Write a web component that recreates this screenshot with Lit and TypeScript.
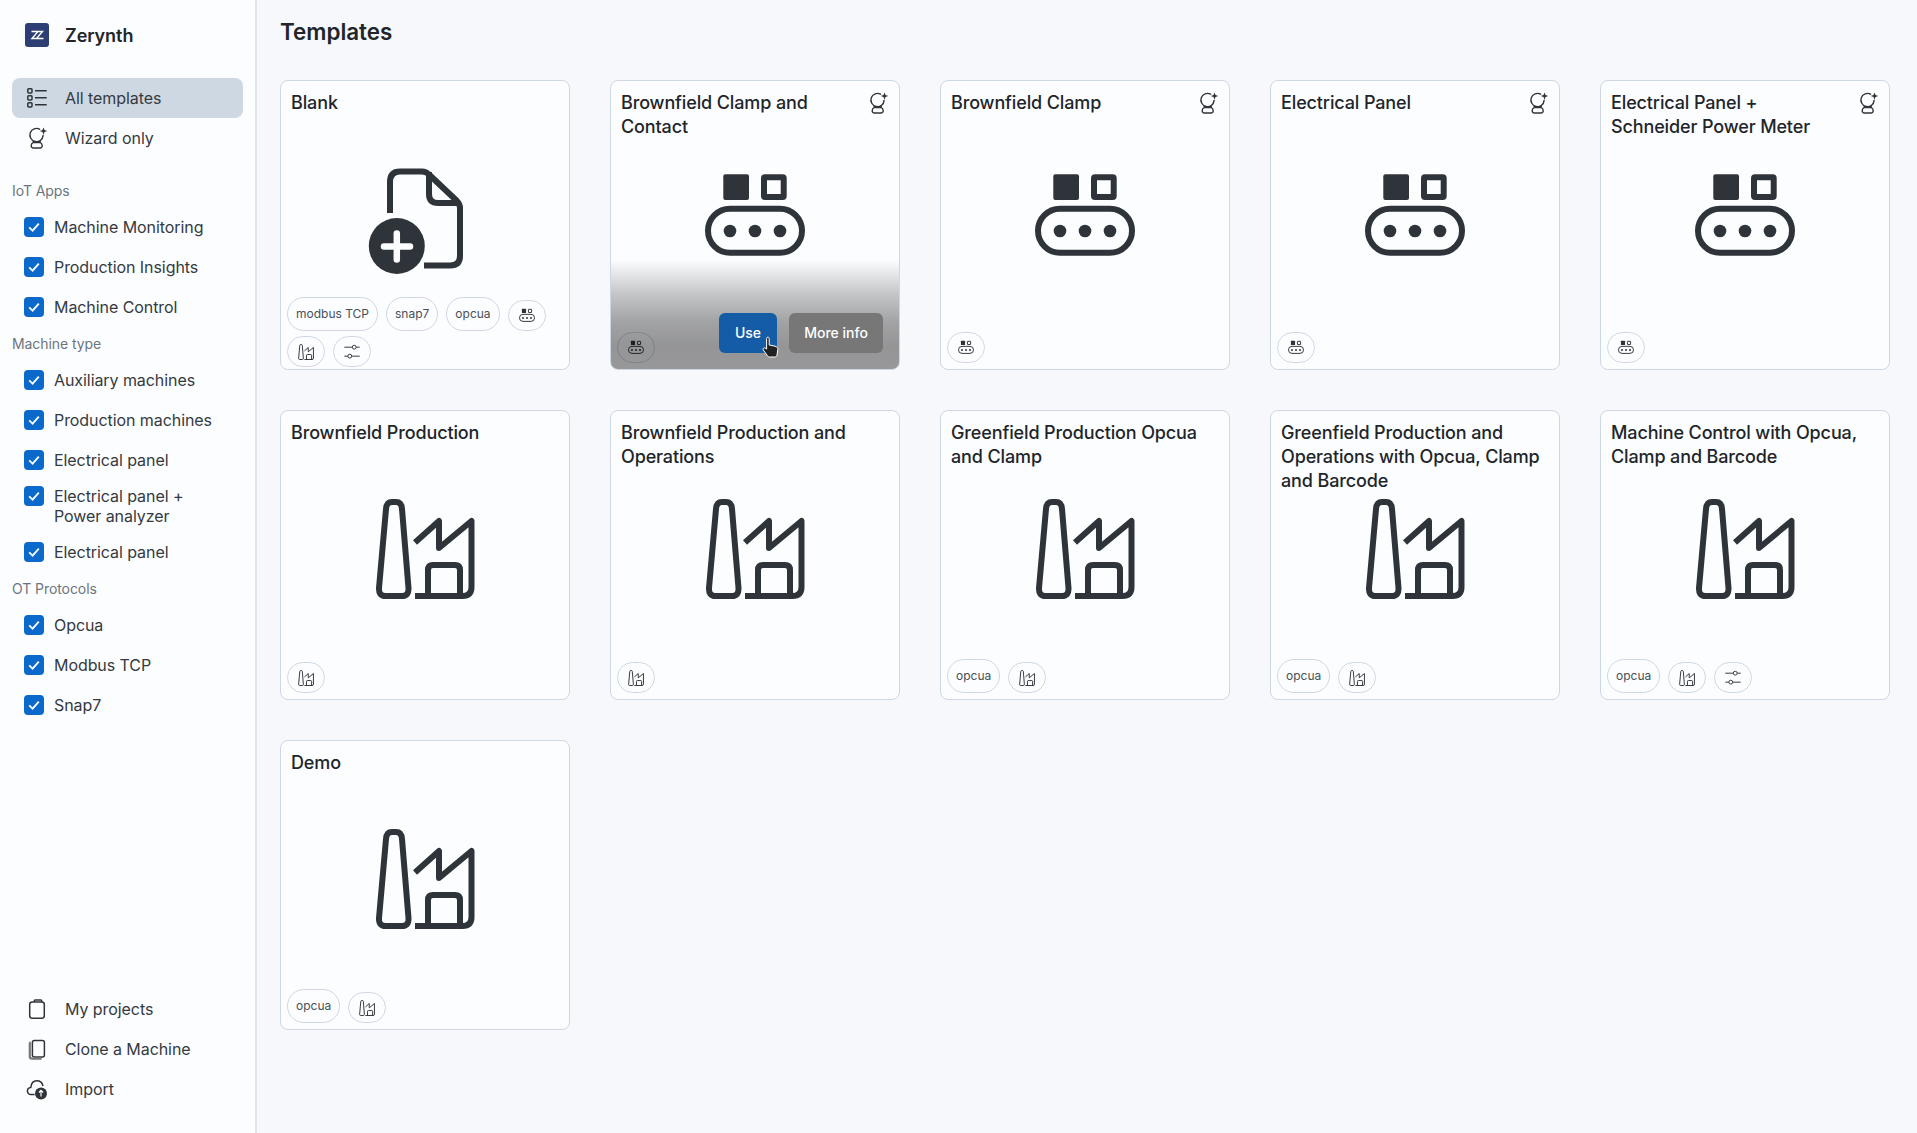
import { LitElement, html, css, svg } from "lit";
import { customElement } from "lit/decorators.js";

const ICON = {
  file: svg`<path d="M15 44V13Q15 2.5 25 2.5H47Q51 2.5 54 5.5L82 32Q85 35 85 39V87Q85 96.5 75 96.5H49" fill="none" stroke="currentColor" stroke-width="6"/>
    <path d="M54 3V25Q54 34 63 34H85" fill="none" stroke="currentColor" stroke-width="6"/>
    <circle cx="21.8" cy="77" r="28" fill="currentColor"/>
    <path d="M9 77.5H35M21.8 64.5V90.5" fill="none" stroke="#fcfdff" stroke-width="6.5" stroke-linecap="round"/>`,
  belt: svg`<rect x="18.3" y="5.3" width="25.7" height="25.7" rx="2" fill="currentColor"/>
    <rect x="59" y="8.3" width="19.7" height="19.7" rx="1" fill="none" stroke="currentColor" stroke-width="6"/>
    <rect x="3" y="39.7" width="94" height="44" rx="22" fill="none" stroke="currentColor" stroke-width="6"/>
    <circle cx="25" cy="62" r="6.3" fill="currentColor"/><circle cx="50" cy="62" r="6.3" fill="currentColor"/><circle cx="75" cy="62" r="6.3" fill="currentColor"/>`,
  factory: svg`<path d="M11 10Q11.5 3 17 3H21Q26.5 3 27 10L33.5 89Q34 97 27 97H10.5Q3.5 97 4 89Z" fill="none" stroke="currentColor" stroke-width="6"/>
    <path d="M40 43.5L64 22V49L96.5 22V88Q96.5 97 87.5 97H40" fill="none" stroke="currentColor" stroke-width="6" stroke-linejoin="round"/>
    <path d="M53 97V71Q53 66 58 66H80Q85 66 85 71V97" fill="none" stroke="currentColor" stroke-width="6"/>`,
  sliders: svg`<path d="M2 20H52M76 20H98M2 76H24M48 76H98" fill="none" stroke="currentColor" stroke-width="6"/>
    <circle cx="64" cy="20" r="12" fill="none" stroke="currentColor" stroke-width="6"/>
    <circle cx="36" cy="76" r="12" fill="none" stroke="currentColor" stroke-width="6"/>`,
  wizard: svg`<path d="M13.6 3.2A6.6 6.6 0 1 0 17.1 9.4M7.2 15V16.6C4.8 17.2 4.4 22 7 22H14.4C17 22 16.6 17.2 14.2 16.6V15M7.2 16.6H14.2" fill="none" stroke="currentColor" stroke-width="1.4" stroke-linecap="round" stroke-linejoin="round"/>
    <path d="M17.5 1.4L18.5 4.1L21.2 5.1L18.5 6.1L17.5 8.8L16.5 6.1L13.8 5.1L16.5 4.1Z" fill="currentColor"/>`,
  list: svg`<rect x="1.8" y="2.7" width="4.2" height="4.2" rx=".9"/><rect x="1.8" y="9.7" width="4.2" height="4.2" rx=".9"/><rect x="1.8" y="16.7" width="4.2" height="4.2" rx=".9"/>
    <path d="M9 4.8H20.7M9 11.8H20.7M9 18.8H20.7"/>`,
  clipboard: svg`<rect x="3.7" y="5" width="14.6" height="16.3" rx="2.5"/><path d="M8.3 5V3.8Q8.3 3 9.1 3H14.9Q15.7 3 15.7 3.8V5"/>`,
  clone: svg`<rect x="6.4" y="3.4" width="12" height="16.6" rx="2"/><path d="M4.6 5.2Q3.8 5.8 3.8 7V19.5Q3.8 21.6 6 21.6H15.6" stroke="#777" stroke-width="2.2"/>`,
  cloud: svg`<path d="M8.6 17.5H5C2.8 17.5 1.4 15.8 1.4 14C1.4 12 2.8 10.6 4.8 10.4C5.2 6.4 7.6 3.7 10.8 3.7C14 3.7 16.4 6 17 9" />
    <circle cx="15" cy="16.4" r="6" fill="currentColor" stroke="none"/>
    <path d="M15 19.5V13.5M12.9 15.5L15 13.4L17.1 15.5" stroke="#fcfdff" stroke-width="1.2"/>`,
};

const CHIP = {
  belt: html`<svg class="chip-ico" viewBox="0 0 100 100">${ICON.belt}</svg>`,
  factory: html`<svg class="chip-ico" viewBox="0 0 100 100">${ICON.factory}</svg>`,
  sliders: html`<svg class="chip-ico" viewBox="0 0 100 100">${ICON.sliders}</svg>`,
};

type Tag = "modbus TCP" | "snap7" | "opcua" | "belt" | "factory" | "sliders";

interface Template {
  title: string;
  icon: "file" | "belt" | "factory";
  wizard?: boolean;
  hover?: boolean;
  tags: Tag[];
}

const TEMPLATES: Template[] = [
  { title: "Blank", icon: "file", tags: ["modbus TCP", "snap7", "opcua", "belt", "factory", "sliders"] },
  { title: "Brownfield Clamp and Contact", icon: "belt", wizard: true, hover: true, tags: ["belt"] },
  { title: "Brownfield Clamp", icon: "belt", wizard: true, tags: ["belt"] },
  { title: "Electrical Panel", icon: "belt", wizard: true, tags: ["belt"] },
  { title: "Electrical Panel + Schneider Power Meter", icon: "belt", wizard: true, tags: ["belt"] },
  { title: "Brownfield Production", icon: "factory", tags: ["factory"] },
  { title: "Brownfield Production and Operations", icon: "factory", tags: ["factory"] },
  { title: "Greenfield Production Opcua and Clamp", icon: "factory", tags: ["opcua", "factory"] },
  { title: "Greenfield Production and Operations with Opcua, Clamp and Barcode", icon: "factory", tags: ["opcua", "factory"] },
  { title: "Machine Control with Opcua, Clamp and Barcode", icon: "factory", tags: ["opcua", "factory", "sliders"] },
  { title: "Demo", icon: "factory", tags: ["opcua", "factory"] },
];

const FILTERS: { label: string; items: string[] }[] = [
  { label: "IoT Apps", items: ["Machine Monitoring", "Production Insights", "Machine Control"] },
  { label: "Machine type", items: ["Auxiliary machines", "Production machines", "Electrical panel", "Electrical panel + Power analyzer", "Electrical panel"] },
  { label: "OT Protocols", items: ["Opcua", "Modbus TCP", "Snap7"] },
];

@customElement("app-root")
export class AppRoot extends LitElement {
  static styles = css`
    :host {
      display: flex;
      height: 1133px;
      overflow: hidden;
      background: #f6f8fb;
      color: #212529;
      font-family: Inter, "Liberation Sans", sans-serif;
      font-size: 16px;
    }
    * {
      box-sizing: border-box;
    }
    .side {
      width: 257px;
      flex: none;
      display: flex;
      flex-direction: column;
      padding: 0 12px;
      background: #fcfdff;
      border-right: 2px solid #e1e5ea;
      letter-spacing: -0.07px;
    }
    .brand {
      height: 78px;
      display: flex;
      align-items: center;
      gap: 16px;
      padding: 0 0 8px 13px;
      font-size: 18px;
      font-weight: 600;
    }
    .logo {
      width: 24px;
      height: 24px;
      display: block;
    }
    .nav {
      height: 40px;
      display: flex;
      align-items: center;
      gap: 15px;
      padding-left: 14px;
      border-radius: 8px;
      color: #343a40;
      line-height: 20px;
    }
    .nav.on {
      background: #ced8e2;
    }
    .nav svg {
      width: 24px;
      height: 24px;
      flex: none;
      fill: none;
      stroke: #2f343a;
      stroke-width: 1.5;
      color: #2f343a;
    }
    .nav svg.wiz {
      stroke: none;
    }
    .filters {
      margin-top: 16px;
    }
    .group {
      height: 33px;
      display: flex;
      align-items: center;
      color: #6c757d;
      font-size: 14px;
    }
    .check {
      min-height: 40px;
      display: flex;
      align-items: flex-start;
      gap: 10px;
      padding: 10px 0 10px 12px;
      line-height: 20px;
      color: #343a40;
    }
    .check.two {
      width: 200px;
      padding: 6px 0 6px 12px;
    }
    .box {
      width: 20px;
      height: 20px;
      flex: none;
      display: flex;
      align-items: center;
      justify-content: center;
      background: #0b69cb;
      border-radius: 4px;
    }
    .box svg {
      width: 14px;
      height: 14px;
    }
    .foot {
      margin-top: auto;
      padding-bottom: 24px;
    }
    main {
      flex: 1;
      padding: 0 23px;
    }
    h1 {
      margin: 0;
      height: 80px;
      padding: 17px 0 0 0;
      font-size: 22.4px;
      line-height: 30px;
      font-weight: 600;
    }
    .grid {
      display: grid;
      grid-template-columns: repeat(5, 290px);
      grid-auto-rows: 290px;
      gap: 40px;
    }
    .card {
      position: relative;
      display: grid;
      overflow: hidden;
      background: #fcfdff;
      border: 1px solid #ced8e4;
      border-radius: 8px;
    }
    .card > * {
      grid-area: 1 / 1;
    }
    .head {
      align-self: start;
      display: flex;
      justify-content: space-between;
      gap: 8px;
      padding: 10px 10px 0;
      font-size: 18px;
      line-height: 24px;
      font-weight: 540;
      letter-spacing: -0.13px;
    }
    .head.wizard span {
      max-width: 220px;
    }
    .wiz-top {
      width: 24px;
      height: 24px;
      flex: none;
      margin-right: -2px;
      color: #2f343a;
    }
    .art {
      justify-self: center;
      align-self: start;
      margin-top: 88px;
      width: 100px;
      height: 100px;
      color: #2f343a;
      overflow: visible;
    }
    .tags {
      align-self: end;
      display: flex;
      flex-wrap: wrap;
      gap: 5px 8px;
      padding: 0 6px 6px;
    }
    .tags.wrapped {
      padding-bottom: 2px;
    }
    .tag {
      height: 34px;
      display: flex;
      align-items: center;
      padding: 0 8px 1px;
      border: 1px solid #ced8e4;
      border-radius: 17px;
      color: #495057;
      font-size: 12px;
      background: #fcfdff;
    }
    .tag.ico {
      width: 38px;
      height: 31px;
      justify-content: center;
      padding: 0;
      align-self: end;
    }
    .chip-ico {
      width: 16px;
      height: 16px;
      color: #2f343a;
    }
    .shade {
      position: absolute;
      inset: 0;
      background: linear-gradient(
        to bottom,
        rgba(0, 0, 0, 0) 62%,
        rgba(0, 0, 0, 0.22) 74%,
        rgba(0, 0, 0, 0.36) 84%,
        rgba(0, 0, 0, 0.41) 92%,
        rgba(0, 0, 0, 0.4) 100%
      );
      display: flex;
      justify-content: flex-end;
      align-items: flex-end;
      gap: 12px;
      padding: 0 16px 16px;
    }
    .btn {
      height: 40px;
      display: flex;
      align-items: center;
      justify-content: center;
      padding-bottom: 2px;
      border-radius: 6px;
      color: #fff;
      font-size: 14px;
      font-weight: 500;
    }
    .btn.use {
      width: 58px;
      background: #155ca6;
    }
    .btn.info {
      width: 94px;
      background: #777;
    }
    .cursor {
      position: absolute;
      left: 151px;
      top: 255px;
      width: 18px;
      height: 22px;
    }
  `;

  private tag(t: Tag) {
    if (t === "belt" || t === "factory" || t === "sliders") {
      return html`<span class="tag ico">${CHIP[t]}</span>`;
    }
    return html`<span class="tag">${t}</span>`;
  }

  private card(t: Template) {
    return html`<div class="card">
      <svg class="art" viewBox="0 0 100 100">${ICON[t.icon]}</svg>
      <div class="head ${t.wizard ? "wizard" : ""}">
        <span>${t.title}</span>
        ${t.wizard ? html`<svg class="wiz-top" viewBox="0 0 24 24">${ICON.wizard}</svg>` : ""}
      </div>
      <div class="tags ${t.tags.length > 4 ? "wrapped" : ""}">${t.tags.map((x) => this.tag(x))}</div>
      ${t.hover
        ? html`<div class="shade">
            <span class="btn use">Use</span>
            <span class="btn info">More info</span>
            <svg class="cursor" viewBox="0 0 18 22">
              <path d="M5 1.5C6 .8 7.2 1.3 7.2 2.6V9L13 10.2C15 10.7 16 11.6 15.8 13.5L15 19C14.8 20.3 14 21 13 21H7.5C6.6 21 6 20.6 5.5 19.8L1.3 14C.4 12.6 2.2 11 3.8 12.4L4.6 13.2V2.6C4.6 2.2 4.8 1.8 5 1.5Z" fill="#222" stroke="#fff" stroke-width="1"/>
            </svg>
          </div>`
        : ""}
    </div>`;
  }

  render() {
    return html`<aside class="side">
        <div class="brand">
          <svg class="logo" viewBox="0 0 24 24">
            <rect width="24" height="24" rx="3" fill="#2c3e73"/>
            <path d="M6.5 8.5H13L7 15.5H12M13 8.5H17.5L11.5 15.5H18.5" fill="none" stroke="#fff" stroke-width="1.4"/>
          </svg>
          Zerynth
        </div>
        <div class="nav on"><svg viewBox="0 0 24 24">${ICON.list}</svg>All templates</div>
        <div class="nav"><svg class="wiz" viewBox="0 0 24 24">${ICON.wizard}</svg>Wizard only</div>
        <div class="filters">
          ${FILTERS.map(
            (f) => html`<div class="group">${f.label}</div>
              ${f.items.map(
                (i) => html`<div class="check ${i.length > 25 ? "two" : ""}">
                  <span class="box">
                    <svg viewBox="0 0 14 14"><path d="M2.2 7.4L5.6 10.6L11.8 3.6" fill="none" stroke="#fff" stroke-width="1.8"/></svg>
                  </span>
                  <span>${i}</span>
                </div>`
              )}`
          )}
        </div>
        <div class="foot">
          <div class="nav"><svg viewBox="0 0 24 24">${ICON.clipboard}</svg>My projects</div>
          <div class="nav"><svg viewBox="0 0 24 24">${ICON.clone}</svg>Clone a Machine</div>
          <div class="nav"><svg viewBox="0 0 24 24">${ICON.cloud}</svg>Import</div>
        </div>
      </aside>
      <main>
        <h1>Templates</h1>
        <div class="grid">${TEMPLATES.map((t) => this.card(t))}</div>
      </main>`;
  }
}
